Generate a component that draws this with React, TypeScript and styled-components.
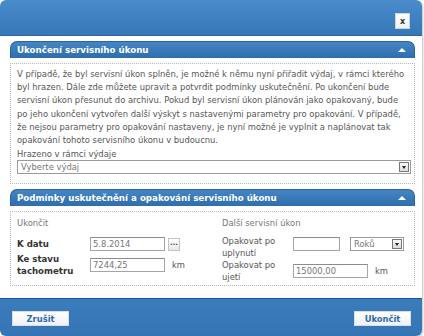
import styled, { createGlobalStyle } from "styled-components";

const GlobalStyle = createGlobalStyle`
  html, body {
    margin: 0;
    padding: 0;
    background: #ffffff;
  }
  body {
    font-family: "DejaVu Sans", Verdana, sans-serif;
    font-size: 8.4px;
    color: #555;
  }
`;

const Dialog = styled.div`
  width: 422px;
  height: 336px;
  display: flex;
  flex-direction: column;
  background: #fff;
  border-radius: 6px;
  box-shadow: 1px 1px 2px rgba(0, 0, 0, 0.25);
  overflow: hidden;
`;

const TitleBar = styled.div`
  height: 36px;
  flex: none;
  display: flex;
  align-items: flex-start;
  justify-content: flex-end;
  padding: 13px 12px 0 0;
  box-sizing: border-box;
  background: linear-gradient(#4a8bcb, #3677b8);
  border-bottom: 1px solid #2c64a0;
`;

const CloseButton = styled.button`
  width: 15px;
  height: 16px;
  padding: 0;
  border: 1px solid #c8d4e0;
  background: linear-gradient(#ffffff, #eef1f4);
  color: #333;
  font-family: "DejaVu Sans", sans-serif;
  font-size: 8px;
  font-weight: bold;
  line-height: 13px;
  cursor: pointer;
`;

const Content = styled.div`
  flex: 1;
  padding: 5px 7px 0 10px;
  display: flex;
  flex-direction: column;
`;

const Section = styled.section`
  display: flex;
  flex-direction: column;
  & + & {
    margin-top: 5px;
  }
`;

const SectionHeader = styled.div`
  height: 16px;
  display: flex;
  align-items: center;
  justify-content: space-between;
  padding: 0 8px 0 6px;
  border-radius: 7px 7px 0 0;
  background: linear-gradient(#4585c4, #2f6dab);
  border: 1px solid #2a639e;
  border-bottom: none;
  color: #fff;
  font-weight: bold;
  font-size: 8.7px;
`;

const Caret = styled.span`
  width: 0;
  height: 0;
  border-left: 4px solid transparent;
  border-right: 4px solid transparent;
  border-bottom: 4px solid #fff;
`;

const SectionBody = styled.div<{ $pad: string }>`
  margin-top: 5px;
  border: 1px dotted #b8b8b8;
  padding: ${(p) => p.$pad};
`;

const Paragraph = styled.p`
  margin: 0 0 2px;
  line-height: 13.2px;
  color: #555;
`;

const Line = styled.span`
  display: block;
  white-space: nowrap;
`;

const FieldLabel = styled.div`
  line-height: 11px;
  margin-top: 1px;
  color: #555;
`;

const SelectBox = styled.div<{ $width: number; $offset?: number }>`
  width: ${(p) => p.$width}px;
  height: 14px;
  margin-left: ${(p) => p.$offset ?? 0}px;
  box-sizing: border-box;
  border: 1px solid #9a9a9a;
  background: #fff;
  display: flex;
  align-items: center;
  justify-content: space-between;
  padding-left: 3px;
  color: #777;
  line-height: 12px;
`;

const DropButton = styled.span`
  width: 10px;
  height: 10px;
  margin-right: 1px;
  box-sizing: border-box;
  border: 1px solid #777;
  background: linear-gradient(#fafafa, #dcdcdc);
  display: flex;
  align-items: center;
  justify-content: center;
  &::after {
    content: "";
    border-left: 2.5px solid transparent;
    border-right: 2.5px solid transparent;
    border-top: 3px solid #222;
  }
`;

const Columns = styled.div`
  display: grid;
  grid-template-columns: 205px 1fr;
`;

const Column = styled.div`
  display: flex;
  flex-direction: column;
`;

const ColumnTitle = styled.div`
  line-height: 11px;
  color: #777;
  margin-bottom: 8px;
`;

const RowLabel = styled.div<{ $bold?: boolean; $width: number }>`
  width: ${(p) => p.$width}px;
  flex: none;
  line-height: 12px;
  font-weight: ${(p) => (p.$bold ? "bold" : "normal")};
  color: ${(p) => (p.$bold ? "#333" : "#555")};
  font-size: ${(p) => (p.$bold ? "8.6px" : "8.4px")};
`;

const Row = styled.div<{ $align: string; $gap: number; $labelShift?: number }>`
  display: flex;
  align-items: ${(p) => p.$align};
  margin-bottom: ${(p) => p.$gap}px;
  & > ${RowLabel} {
    margin-top: ${(p) => p.$labelShift ?? 0}px;
  }
`;

const TextInput = styled.div<{ $width: number }>`
  width: ${(p) => p.$width}px;
  height: 14px;
  box-sizing: border-box;
  border: 1px solid #a5a5a5;
  border-top-color: #8c8c8c;
  background: #fff;
  padding-left: 2px;
  line-height: 12px;
  color: #777;
`;

const Unit = styled.span`
  margin-left: 7px;
  color: #555;
`;

const DotsButton = styled.span`
  margin-left: 3px;
  width: 12px;
  height: 13px;
  box-sizing: border-box;
  border: 1px solid #c4c4c4;
  background: linear-gradient(#fff, #e8e8e8);
  color: #445;
  font-size: 7px;
  font-weight: bold;
  line-height: 9px;
  text-align: center;
`;

const Footer = styled.div`
  height: 38px;
  flex: none;
  display: flex;
  align-items: flex-start;
  justify-content: space-between;
  padding: 12px 11px 0 12px;
  box-sizing: border-box;
  background: linear-gradient(#3b7cbd, #3574b5);
  border-top: 1px solid #1f5592;
`;

const FooterButton = styled.button`
  width: 57px;
  height: 15px;
  padding: 0;
  border: 1px solid #d6dee8;
  background: linear-gradient(#ffffff, #eef2f6);
  color: #2f6aa8;
  font-family: "DejaVu Sans", sans-serif;
  font-size: 8.4px;
  font-weight: bold;
  cursor: pointer;
`;

const intro = [
  "V případě, že byl servisní úkon splněn, je možné k němu nyní přiřadit výdaj, v rámci kterého",
  "byl hrazen. Dále zde můžete upravit a potvrdit podmínky uskutečnění. Po ukončení bude",
  "servisní úkon přesunut do archivu. Pokud byl servisní úkon plánován jako opakovaný, bude",
  "po jeho ukončení vytvořen další výskyt s nastavenými parametry pro opakování. V případě,",
  "že nejsou parametry pro opakování nastaveny, je nyní možné je vyplnit a naplánovat tak",
  "opakování tohoto servisního úkonu v budoucnu."
];

export default function App() {
  return (
    <>
      <GlobalStyle />
      <Dialog>
        <TitleBar>
          <CloseButton>x</CloseButton>
        </TitleBar>
        <Content>
          <Section>
            <SectionHeader>
              <span>Ukončení servisního úkonu</span>
              <Caret />
            </SectionHeader>
            <SectionBody $pad="4px 5px 9px 6px">
              <Paragraph>
                {intro.map((line) => (
                  <Line key={line}>{line}</Line>
                ))}
              </Paragraph>
              <FieldLabel>Hrazeno v rámci výdaje</FieldLabel>
              <SelectBox $width={394}>
                Vyberte výdaj
                <DropButton />
              </SelectBox>
            </SectionBody>
          </Section>
          <Section>
            <SectionHeader>
              <span>Podmínky uskutečnění a opakování servisního úkonu</span>
              <Caret />
            </SectionHeader>
            <SectionBody $pad="6px 5px 2px 6px">
              <Columns>
                <Column>
                  <ColumnTitle>Ukončit</ColumnTitle>
                  <Row $align="center" $gap={2}>
                    <RowLabel $bold $width={73}>K datu</RowLabel>
                    <TextInput $width={75}>5.8.2014</TextInput>
                    <DotsButton>...</DotsButton>
                  </Row>
                  <Row $align="center" $gap={0}>
                    <RowLabel $bold $width={73}>
                      Ke stavu
                      <br />
                      tachometru
                    </RowLabel>
                    <TextInput $width={75}>7244,25</TextInput>
                    <Unit>km</Unit>
                  </Row>
                </Column>
                <Column>
                  <ColumnTitle>Další servisní úkon</ColumnTitle>
                  <Row $align="flex-start" $gap={0} $labelShift={-2}>
                    <RowLabel $width={71}>
                      Opakovat po
                      <br />
                      uplynutí
                    </RowLabel>
                    <TextInput $width={47}>&nbsp;</TextInput>
                    <SelectBox $width={54} $offset={10}>
                      Roků
                      <DropButton />
                    </SelectBox>
                  </Row>
                  <Row $align="center" $gap={0}>
                    <RowLabel $width={71}>
                      Opakovat po
                      <br />
                      ujetí
                    </RowLabel>
                    <TextInput $width={75}>15000,00</TextInput>
                    <Unit>km</Unit>
                  </Row>
                </Column>
              </Columns>
            </SectionBody>
          </Section>
        </Content>
        <Footer>
          <FooterButton>Zrušit</FooterButton>
          <FooterButton>Ukončit</FooterButton>
        </Footer>
      </Dialog>
    </>
  );
}
